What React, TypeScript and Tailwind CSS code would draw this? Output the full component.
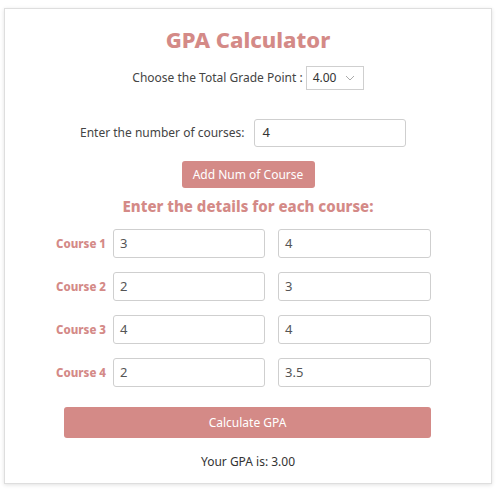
import React from "react";

const courses = [
  { name: "Course 1", credit: "3", grade: "4" },
  { name: "Course 2", credit: "2", grade: "3" },
  { name: "Course 3", credit: "4", grade: "4" },
  { name: "Course 4", credit: "2", grade: "3.5" },
];

export default function App() {
  return (
    <div className="min-h-[491px] bg-white pt-[8px] pl-[4px] font-['Noto_Sans',sans-serif] text-[#444]">
      <div className="w-[488px] h-[476px] border border-[#dedede] bg-white shadow-[0_1px_4px_rgba(0,0,0,0.12)] flex flex-col">
        {/* Title */}
        <h1 className="mt-[15px] text-center text-[22px] leading-[30px] font-extrabold text-[#d48a87]">
          GPA Calculator
        </h1>

        {/* Grade point */}
        <div className="mt-[12px] flex items-center justify-center gap-[3px] text-[12px]">
          <span>Choose the Total Grade Point :</span>
          <div className="w-[58px] h-[24px] border border-[#cfcfcf] flex items-center justify-between pl-[6px] pr-[8px] text-[12px] text-[#333]">
            <span>4.00</span>
            <svg width="10" height="6" viewBox="0 0 10 6" fill="none">
              <path d="M1 1l4 4 4-4" stroke="#aaa" strokeWidth="1" />
            </svg>
          </div>
        </div>

        {/* Number of courses */}
        <div className="mt-[29px] flex items-center gap-[9px] pl-[75px] text-[12px]">
          <span>Enter the number of courses:</span>
          <div className="w-[152px] h-[28px] border border-[#cfcfcf] rounded-[3px] flex items-center px-[8px] text-[13px] text-[#333]">
            4
          </div>
        </div>

        <button className="mt-[14px] mx-auto w-[133px] h-[27px] rounded-[3px] bg-[#d48a87] text-white text-[12px]">
          Add Num of Course
        </button>

        <h2 className="mt-[7px] text-center text-[15px] leading-[22px] font-extrabold text-[#d48a87]">
          Enter the details for each course:
        </h2>

        {/* Course rows */}
        <div className="mt-[12px] flex flex-col gap-[14px] pl-[51px]">
          {courses.map((c) => (
            <div key={c.name} className="flex items-center">
              <span className="w-[50px] text-right text-[11.5px] font-extrabold text-[#d48a87]">{c.name}</span>
              <div className="ml-[7px] w-[152px] h-[29px] border border-[#cfcfcf] rounded-[3px] flex items-center px-[6px] text-[13px] text-[#555]">
                {c.credit}
              </div>
              <div className="ml-[13px] w-[153px] h-[29px] border border-[#cfcfcf] rounded-[3px] flex items-center px-[6px] text-[13px] text-[#555]">
                {c.grade}
              </div>
            </div>
          ))}
        </div>

        <button className="mt-[20px] ml-[59px] w-[367px] h-[31px] rounded-[3px] bg-[#d48a87] text-white text-[12px]">
          Calculate GPA
        </button>

        <p className="mt-[15px] text-center text-[12px] text-[#333]">Your GPA is: 3.00</p>
      </div>
    </div>
  );
}
